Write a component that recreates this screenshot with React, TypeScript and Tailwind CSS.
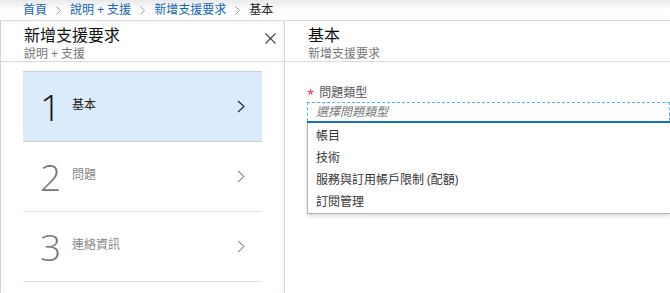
import React from "react";

const font = { fontFamily: '"Open Sans", "Noto Sans CJK TC", sans-serif' };

const Chevron = ({ className }: { className?: string }) => (
  <svg width="8" height="13" viewBox="0 0 8 13" className={className}>
    <polyline points="1,1 7,6.5 1,12" fill="none" stroke="currentColor" strokeWidth="1.1" />
  </svg>
);

const Crumb = () => (
  <svg width="5" height="9" viewBox="0 0 5 9" className="text-gray-400">
    <polyline points="0.5,0.5 4.5,4.5 0.5,8.5" fill="none" stroke="currentColor" strokeWidth="1" />
  </svg>
);

const steps = [
  { n: "1", label: "基本", active: true },
  { n: "2", label: "問題", active: false },
  { n: "3", label: "連絡資訊", active: false },
];

const options = ["帳目", "技術", "服務與訂用帳戶限制 (配額)", "訂閱管理"];

export default function App() {
  return (
    <div className="w-[670px] h-[293px] overflow-hidden bg-white text-[12px]" style={font}>
      {/* breadcrumb */}
      <div className="h-[21px] border-b border-[#dcdcdc] bg-gradient-to-b from-[#e9e9e9] via-white to-white flex items-center gap-[9px] pl-[23px]">
        <span className="text-[#1464b4]">首頁</span>
        <Crumb />
        <span className="text-[#1464b4]">說明 + 支援</span>
        <Crumb />
        <span className="text-[#1464b4]">新增支援要求</span>
        <Crumb />
        <span className="text-[#222]">基本</span>
      </div>

      <div className="flex h-[272px]">
        {/* left blade */}
        <div className="w-[285px] flex flex-col border-l border-r border-[#d6d6d6] shadow-[inset_-4px_0_4px_-3px_rgba(0,0,0,0.08)]">
          <div className="h-[41px] border-b border-[#dcdcdc] flex justify-between pl-[23px] pr-[8px] pt-[5px]">
            <div className="flex flex-col">
              <span className="text-[16px] leading-[19px] text-[#111]">新增支援要求</span>
              <span className="mt-[2px] text-[12px] leading-[14px] text-[#777]">說明 + 支援</span>
            </div>
            <svg width="11" height="11" viewBox="0 0 11 11" className="mt-[7px] text-[#444]">
              <path d="M0.5 0.5 L10.5 10.5 M10.5 0.5 L0.5 10.5" stroke="currentColor" strokeWidth="1.1" />
            </svg>
          </div>
          <div className="flex flex-col px-[22px] pt-[9px]">
            {steps.map((s) => (
              <div
                key={s.n}
                className={
                  s.active
                    ? "h-[71px] flex items-center bg-[#dcebfc] border-t border-b border-[#c5d2e0] pl-[17px] pr-[17px]"
                    : "h-[70px] flex items-center border-b border-[#e2e2e2] pl-[17px] pr-[17px]"
                }
              >
                <span
                  className={
                    s.active
                      ? "w-[32px] text-[37px] font-light leading-none text-[#111]"
                      : "w-[32px] text-[37px] font-light leading-none text-[#777]"
                  }
                >
                  {s.n}
                </span>
                <span className={s.active ? "flex-1 text-[12px] text-[#222] -mt-[3px]" : "flex-1 text-[12px] text-[#888] -mt-[3px]"}>
                  {s.label}
                </span>
                <Chevron className={s.active ? "text-[#222]" : "text-[#999]"} />
              </div>
            ))}
          </div>
        </div>

        {/* right blade */}
        <div className="flex-1 flex flex-col">
          <div className="h-[41px] border-b border-[#dcdcdc] flex flex-col pl-[23px] pt-[5px]">
            <span className="text-[16px] leading-[19px] text-[#111]">基本</span>
            <span className="mt-[2px] text-[12px] leading-[14px] text-[#777]">新增支援要求</span>
          </div>
          <div className="pl-[22px] pt-[22px] flex flex-col">
            <div className="flex items-center h-[18px] gap-[5px]">
              <span className="text-[#e0202e] text-[13px] leading-none mt-[3px]">*</span>
              <span className="text-[#555]">問題類型</span>
            </div>
            <div className="border-b-2 border-[#1b6fc2]">
              <div className="h-[19px] border border-b-0 border-dashed border-[#52b3e8] pl-[8px] flex items-center">
                <span className="italic text-[#777]">選擇問題類型</span>
              </div>
            </div>
            <div className="border-l border-b border-[#b4b4b4] shadow-[0_2px_4px_rgba(0,0,0,0.15)] pt-[2px]">
              {options.map((o) => (
                <div key={o} className="h-[22px] flex items-center pl-[8px] text-[#333]">
                  {o}
                </div>
              ))}
            </div>
          </div>
        </div>
      </div>
    </div>
  );
}
